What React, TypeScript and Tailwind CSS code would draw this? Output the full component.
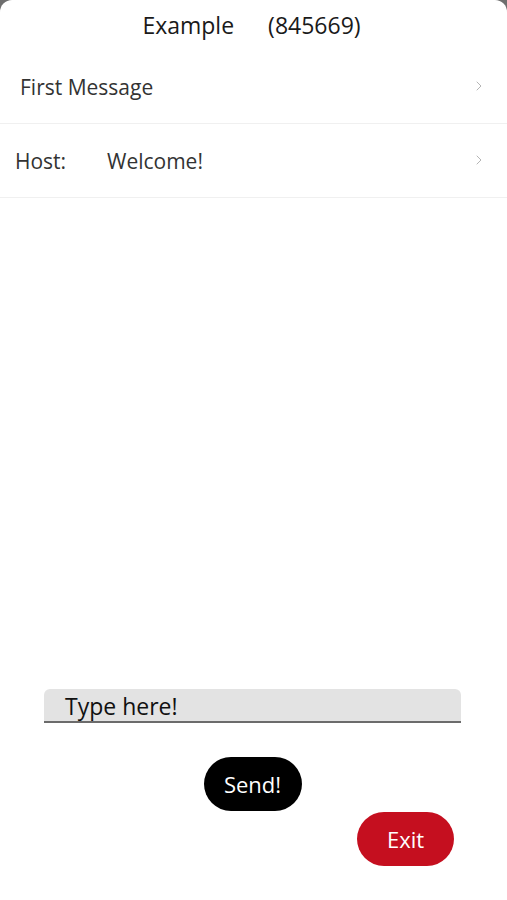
import { ChevronRight } from "lucide-react";

const font = { fontFamily: '"Open Sans", "Noto Sans", sans-serif' };

function Row({ children }: { children: React.ReactNode }) {
  return (
    <div className="flex h-[74px] items-center justify-between border-b border-[#f0f0f0] pt-[3px] pr-[20px]">
      <div className="flex items-center text-[21px] text-[#333]">{children}</div>
      <ChevronRight size={16} strokeWidth={1.5} className="mt-[-4px] text-[#b5b5b5]" aria-hidden />
    </div>
  );
}

export default function App() {
  return (
    <div className="h-[900px] w-[507px] bg-[#6e6e6e]" style={font}>
      <div className="flex h-full flex-col rounded-t-[12px] bg-white">
        {/* Header */}
        <div className="flex h-[50px] items-center justify-center gap-[34px] pt-[1px] pr-[4px] text-[23px] text-[#1a1a1a]">
          <span>Example</span>
          <span>(845669)</span>
        </div>

        <Row>
          <span className="pl-[20px]">First Message</span>
        </Row>
        <Row>
          <span className="w-[107px] pl-[15px]">Host:</span>
          <span>Welcome!</span>
        </Row>

        <div className="flex-1" />

        {/* Input */}
        <div className="pl-[44px] pr-[46px]">
          <div className="flex h-[34px] items-center rounded-t-[6px] border-b-2 border-[#6b6b6b] bg-[#e3e3e3] pt-[3px] pl-[21px] text-[23px] text-[#111]">
            Type here!
          </div>
        </div>

        <div className="mt-[34px] flex justify-center">
          <button className="ml-[-2px] flex h-[54px] w-[98px] items-center justify-center rounded-full bg-black text-[22px] text-white">
            Send!
          </button>
        </div>

        <div className="mt-[1px] mb-[34px] flex justify-end pr-[53px]">
          <button className="flex h-[54px] w-[97px] items-center justify-center rounded-full bg-[#c50f1f] text-[22px] text-white">
            Exit
          </button>
        </div>
      </div>
    </div>
  );
}
